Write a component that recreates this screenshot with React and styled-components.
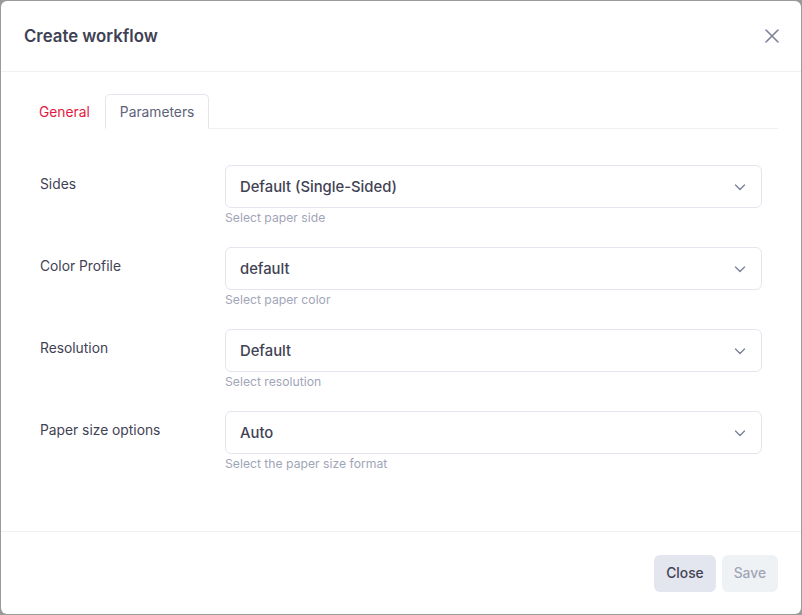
import React from "react";
import styled, { createGlobalStyle } from "styled-components";

const Global = createGlobalStyle`
  html, body { margin: 0; padding: 0; background: #9a9a9a; }
  body { font-family: Inter, "Open Sans", sans-serif; }
  * { box-sizing: border-box; }
`;

const fields = [
  { label: "Sides", value: "Default (Single-Sided)", hint: "Select paper side" },
  { label: "Color Profile", value: "default", hint: "Select paper color" },
  { label: "Resolution", value: "Default", hint: "Select resolution" },
  { label: "Paper size options", value: "Auto", hint: "Select the paper size format" },
];

function Chevron() {
  return (
    <svg width="12" height="12" viewBox="0 0 12 12" fill="none">
      <path d="M1.5 4l4.5 4.5L10.5 4" stroke="#7e8299" strokeWidth="1.4" strokeLinecap="round" strokeLinejoin="round" />
    </svg>
  );
}

function CloseIcon() {
  return (
    <svg width="14" height="14" viewBox="0 0 14 14" fill="none">
      <path d="M1 1l12 12M13 1L1 13" stroke="#7e8299" strokeWidth="1.6" strokeLinecap="round" />
    </svg>
  );
}

export default function App() {
  return (
    <>
      <Global />
      <Page>
        <Modal>
          <Header>
            <Title>Create workflow</Title>
            <IconButton aria-label="close">
              <CloseIcon />
            </IconButton>
          </Header>
          <Body>
            <Tabs>
              <Tab>General</Tab>
              <Tab $active>Parameters</Tab>
            </Tabs>
            <Form>
              {fields.map((f) => (
                <Row key={f.label}>
                  <Label>{f.label}</Label>
                  <Control>
                    <Select>
                      <span>{f.value}</span>
                      <Chevron />
                    </Select>
                    <Hint>{f.hint}</Hint>
                  </Control>
                </Row>
              ))}
            </Form>
          </Body>
          <Footer>
            <Button>Close</Button>
            <Button $disabled>Save</Button>
          </Footer>
        </Modal>
      </Page>
    </>
  );
}

const Page = styled.div`
  width: 802px;
  height: 615px;
  padding: 1px;
`;

const Modal = styled.div`
  width: 800px;
  height: 613px;
  background: #fff;
  border-radius: 6px;
  display: flex;
  flex-direction: column;
`;

const Header = styled.div`
  height: 71px;
  display: flex;
  align-items: center;
  justify-content: space-between;
  padding: 0 22px 0 23px;
  border-bottom: 1px solid #eff2f5;
`;

const Title = styled.h2`
  margin: 0;
  font-size: 16.8px;
  font-weight: 600;
  color: #3f4254;
`;

const IconButton = styled.button`
  border: 0;
  background: none;
  padding: 0;
  display: flex;
  cursor: pointer;
`;

const Body = styled.div`
  flex: 1;
  padding: 22px 23px 0 23px;
`;

const Tabs = styled.div`
  display: flex;
  border-bottom: 1px solid #eff2f5;
  height: 35px;
`;

const Tab = styled.div`
  padding: 0 14px;
  height: 35px;
  display: flex;
  align-items: center;
  font-size: 13.8px;
  color: ${(p) => (p.$active ? "#5e6278" : "#e5173f")};
  border: 1px solid ${(p) => (p.$active ? "#e4e6ef" : "transparent")};
  border-bottom: ${(p) => (p.$active ? "1px solid #fff" : "none")};
  border-radius: 5px 5px 0 0;
  margin-bottom: -1px;
  background: #fff;
`;

const Form = styled.div`
  display: flex;
  flex-direction: column;
  gap: 20px;
  padding: 36px 16px 0 16px;
`;

const Row = styled.div`
  display: grid;
  grid-template-columns: 185px 1fr;
  align-items: start;
`;

const Label = styled.div`
  font-size: 13.8px;
  color: #3f4254;
  padding-top: 11px;
`;

const Control = styled.div`
  display: flex;
  flex-direction: column;
`;

const Select = styled.div`
  height: 43px;
  border: 1px solid #e4e6ef;
  border-radius: 6px;
  display: flex;
  align-items: center;
  justify-content: space-between;
  padding: 0 15px 0 14px;
  font-size: 14.8px;
  font-weight: 500;
  color: #3f4254;
`;

const Hint = styled.div`
  font-size: 12.2px;
  color: #a1a5b7;
  margin-top: 1px;
  line-height: 18px;
`;

const Footer = styled.div`
  height: 83px;
  border-top: 1px solid #eff2f5;
  display: flex;
  justify-content: flex-end;
  align-items: center;
  gap: 6px;
  padding: 0 23px 0 0;
`;

const Button = styled.button`
  height: 37px;
  padding: 0 12px;
  border: 0;
  border-radius: 6px;
  font-family: inherit;
  font-size: 13.8px;
  font-weight: 500;
  background: ${(p) => (p.$disabled ? "#eff2f5" : "#e4e6ef")};
  color: ${(p) => (p.$disabled ? "#a1a5b7" : "#3f4254")};
`;
